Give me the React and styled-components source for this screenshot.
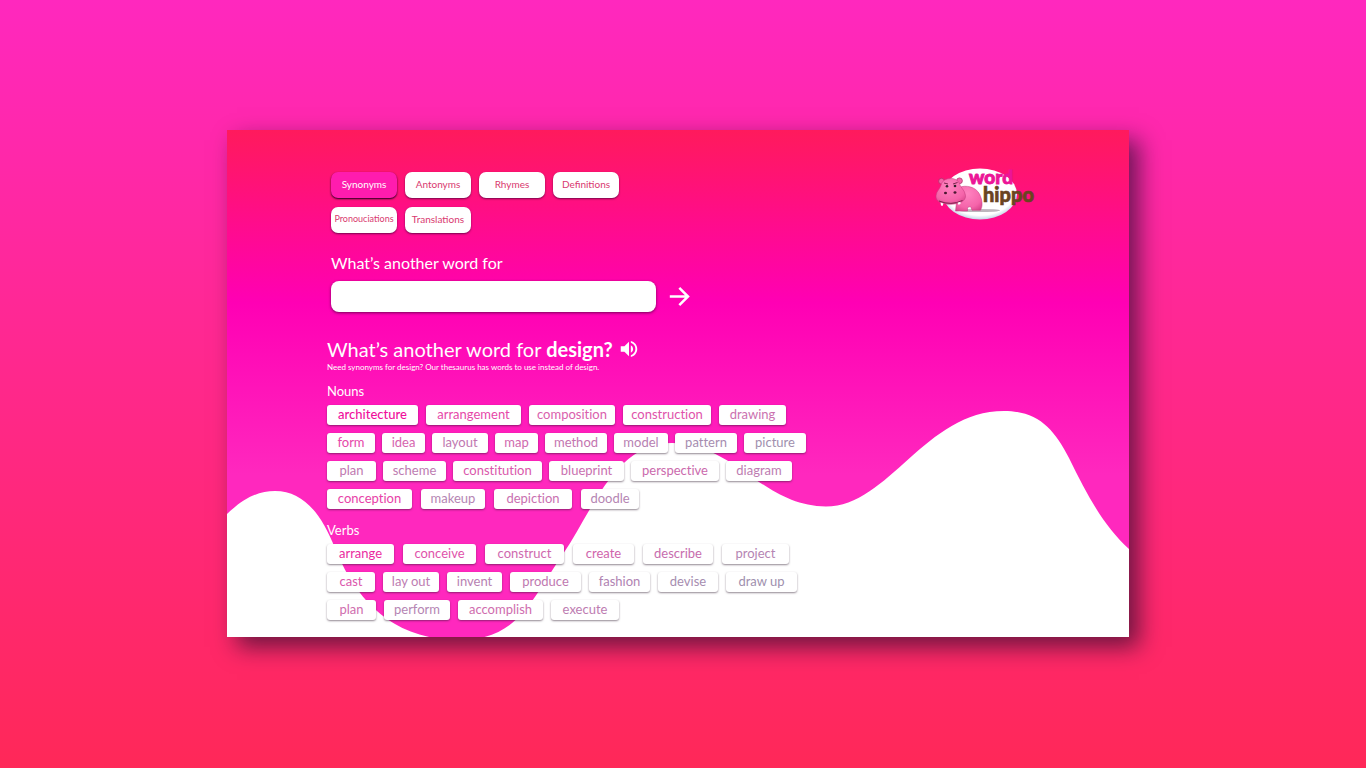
import React, { useState } from 'react';
import styled, { createGlobalStyle } from 'styled-components';

const GlobalStyle = createGlobalStyle`
  *, *::before, *::after { box-sizing: border-box; }
  body {
    margin: 0;
    font-family: Lato, "Open Sans", sans-serif;
    font-variant-ligatures: none;
  }
`;

const Page = styled.div`
  display: flex;
  min-height: 100vh;
  padding: 130px 237px 131px 227px;
  background: linear-gradient(180deg, #ff28be 0%, #ff2858 100%);
`;

const Panel = styled.main`
  position: relative;
  flex: 1;
  min-width: 0;
  padding: 38px 94px 17px 100px;
  background: linear-gradient(180deg, #ff1a5c 0%, #ff00b4 34%, #ff28be 68%, #ff28be 100%);
  box-shadow: 10px 10px 22px 0 rgba(30, 12, 42, 0.65);
`;

const Wave = styled.svg`
  position: absolute;
  inset: 0;
  width: 100%;
  height: 100%;
`;

const Content = styled.div`
  position: relative;
`;

const Header = styled.header`
  display: flex;
  justify-content: space-between;
  align-items: flex-start;
`;

const Tabs = styled.nav`
  display: grid;
  grid-template-columns: repeat(4, 66px);
  gap: 9px 8px;
  padding: 4px 0 0 4px;
`;

const Tab = styled.button`
  height: 26px;
  padding: 0 0 2px;
  border: 0;
  border-radius: 7px;
  font-family: inherit;
  font-size: ${(p) => (p.$small ? '9px' : '10px')};
  line-height: 12px;
  cursor: pointer;
  color: ${(p) => (p.$active ? '#fff' : '#d9396f')};
  background: ${(p) => (p.$active ? '#ff1cae' : '#fff')};
  box-shadow: 0 1px 2px ${(p) => (p.$active ? '#20001c' : 'rgba(60, 0, 50, 0.7)')};
`;

const Search = styled.form`
  padding: 20px 0 0 4px;
`;

const SearchLabel = styled.label`
  display: block;
  color: #fff;
  font-size: 16px;
  line-height: 20px;
`;

const SearchRow = styled.div`
  display: flex;
  align-items: center;
  gap: 13px;
  margin-top: 8px;
`;

const SearchInput = styled.input`
  width: 325px;
  height: 31px;
  padding: 0 12px;
  border: 0;
  border-radius: 8px;
  background: #fff;
  font: inherit;
  box-shadow: 0 1px 3px rgba(60, 0, 50, 0.7);
`;

const IconButton = styled.button`
  display: flex;
  padding: 0;
  border: 0;
  background: none;
  color: #fff;
  cursor: pointer;
`;

const TitleRow = styled.div`
  display: flex;
  align-items: center;
  gap: 5px;
  margin-top: 25px;
`;

const Title = styled.h1`
  margin: 0;
  color: #fff;
  font-size: 20px;
  font-weight: 400;
  line-height: 24px;
`;

const Subtitle = styled.p`
  margin: 1px 0 0;
  color: #fff;
  font-size: 8px;
  line-height: 10px;
`;

const Group = styled.section`
  margin-top: ${(p) => p.$top};
`;

const GroupTitle = styled.h2`
  margin: 0 0 6px;
  color: #fff;
  font-size: 13px;
  font-weight: 400;
  line-height: 16px;
`;

const Rows = styled.div`
  display: flex;
  flex-direction: column;
  gap: 8px;
`;

const Row = styled.div`
  display: flex;
  gap: ${(p) => p.$gap}px;
`;

const Chip = styled.a`
  flex: none;
  width: ${(p) => p.$width}px;
  height: 20px;
  border-radius: 3px;
  background: #fff;
  box-shadow: 0 1px 2px rgba(40, 20, 40, 0.5);
  color: ${(p) => p.$tone};
  font-size: 13px;
  font-weight: ${(p) => (p.$strong ? 500 : 400)};
  line-height: 19px;
  text-align: center;
  text-decoration: none;
  white-space: nowrap;
`;

const LogoLink = styled.a`
  display: block;
  flex: none;
  margin-left: 16px;
`;

const LogoDrawing = styled.svg`
  display: block;
  overflow: visible;
`;

const tabs = ['Synonyms', 'Antonyms', 'Rhymes', 'Definitions', 'Pronouciations', 'Translations'];

const nouns = [
  { gap: 8, words: [['architecture', 91, '#f00f9c'], ['arrangement', 95, '#e648a9'], ['composition', 86, '#da60ad'], ['construction', 88, '#df53ab'], ['drawing', 67, '#cb72b0']] },
  { gap: 7, words: [['form', 48, '#e648a9'], ['idea', 43, '#d565ae'], ['layout', 56, '#c078b0'], ['map', 43, '#cf69ae'], ['method', 62, '#c375b0'], ['model', 54, '#b781b2'], ['pattern', 62, '#a68db0'], ['picture', 62, '#a090ae']] },
  { gap: 7, words: [['plan', 49, '#c078b0'], ['scheme', 63, '#bd7cb1'], ['constitution', 89, '#da58ab'], ['blueprint', 75, '#c970af'], ['perspective', 88, '#cb6aad'], ['diagram', 66, '#bd7cb1']] },
  { gap: 9, words: [['conception', 85, '#e742a8'], ['makeup', 64, '#b585b3'], ['depiction', 78, '#c970b0'], ['doodle', 58, '#b585b3']] },
];

const verbs = [
  { gap: 9, words: [['arrange', 67, '#ea2ba0'], ['conceive', 73, '#df53ab'], ['construct', 79, '#cf69ae'], ['create', 61, '#d065ac'], ['describe', 70, '#c76dae'], ['project', 67, '#b585b3']] },
  { gap: 8, words: [['cast', 48, '#db56ac'], ['lay out', 56, '#bd7cb1'], ['invent', 55, '#b781b2'], ['produce', 71, '#c078b0'], ['fashion', 61, '#b083b2'], ['devise', 60, '#a68db0'], ['draw up', 71, '#a090ae']] },
  { gap: 8, words: [['plan', 49, '#cf6dae'], ['perform', 66, '#b585b3'], ['accomplish', 85, '#cf6dae'], ['execute', 68, '#bd7cb1']] },
];

function ArrowIcon() {
  return (
    <svg width="22" height="20" viewBox="0 0 22 20" fill="none" stroke="currentColor" strokeWidth="2.5" aria-hidden="true">
      <path d="M0.800 9.500H19.200M10.300 0.900L19 9.500L10.300 18.100" />
    </svg>
  );
}

function SpeakerIcon() {
  return (
    <svg width="22" height="22" viewBox="0 0 24 24" fill="currentColor" aria-hidden="true">
      <path d="M3 9v6h4l5 5V4L7 9H3zm13.500 3A4.500 4.500 0 0 0 14 7.970v8.050c1.480-.73 2.500-2.250 2.500-4.020zM14 3.230v2.060c2.890.86 5 3.540 5 6.710s-2.110 5.850-5 6.710v2.060c4.010-.91 7-4.490 7-8.770s-2.990-7.860-7-8.770z" />
    </svg>
  );
}

function HippoLogo() {
  return (
    <LogoDrawing width="98" height="54" viewBox="0 0 98 54" role="img" aria-label="Word Hippo">
      <defs>
        <radialGradient id="oval" cx="0.5" cy="0.45" r="0.55">
          <stop offset="0.85" stopColor="#fff" />
          <stop offset="1" stopColor="#c3d6e8" />
        </radialGradient>
        <radialGradient id="skin" cx="0.45" cy="0.3" r="0.8">
          <stop offset="0" stopColor="#ff83c0" />
          <stop offset="0.7" stopColor="#f564aa" />
          <stop offset="1" stopColor="#d8428a" />
        </radialGradient>
      </defs>
      <ellipse cx="43" cy="26" rx="37" ry="25.500" fill="url(#oval)" />
      <ellipse cx="42" cy="42.500" rx="21" ry="1.600" fill="#bdb6bd" />
      <path d="M22 19.500C29 16.500 39 19 42.500 26C46 33 45.500 39 43.500 42.200H35L33.500 38.500L30.500 39.500V43H18.500L19.500 34Z" fill="url(#skin)" stroke="#c23b7d" strokeWidth="0.500" />
      <circle cx="4.500" cy="13.200" r="2.900" fill="#f564aa" stroke="#a92a61" strokeWidth="0.700" />
      <circle cx="22.500" cy="12.800" r="2.900" fill="#f564aa" stroke="#a92a61" strokeWidth="0.700" />
      <path d="M4.500 15.500C7 9 20 8.500 22.500 15.500C23 19.500 28 22 28.500 27.500C29 33 23 35.800 14 36.300C5 36.500-1.500 33.500-1 28C-0.500 22.500 4 20 4.500 15.500Z" fill="url(#skin)" stroke="#c23b7d" strokeWidth="0.500" />
      <path d="M7 15L11 16M16 16L20.500 14.500M2 33Q14 38 25.500 32.500" fill="none" stroke="#6e1c43" strokeWidth="0.900" />
      <circle cx="10" cy="18.300" r="1.300" fill="#33202b" />
      <circle cx="18" cy="18" r="1.300" fill="#33202b" />
      <ellipse cx="8.500" cy="25" rx="1.500" ry="1.200" fill="#4a1730" />
      <ellipse cx="18" cy="24.500" rx="1.500" ry="1.200" fill="#4a1730" />
      <path d="M3.500 34.500L6.500 35.500L5.500 38L4 37.500ZM20.500 34.800L23.500 33.800L23.500 36L21.500 36.700Z" fill="#fff" />
      <text x="32" y="16" fontFamily="Lato, sans-serif" fontSize="19" fontWeight="900" fill="#ec1597" stroke="#ec1597" strokeWidth="0.900">word</text>
      <text x="46" y="34" fontFamily="Lato, sans-serif" fontSize="20" fontWeight="900" fill="#6a4420" stroke="#6a4420" strokeWidth="0.600">hippo</text>
    </LogoDrawing>
  );
}

function WordRows({ rows }) {
  return (
    <Rows>
      {rows.map((row) => (
        <Row key={row.words[0][0]} $gap={row.gap}>
          {row.words.map(([word, width, tone]) => (
            <Chip key={word} href={`#${word}`} $width={width} $tone={tone} $strong={word === 'architecture'}>
              {word}
            </Chip>
          ))}
        </Row>
      ))}
    </Rows>
  );
}

export default function App() {
  const [active, setActive] = useState('Synonyms');
  return (
    <Page>
      <GlobalStyle />
      <Panel>
        <Wave viewBox="0 0 902 507" preserveAspectRatio="none" aria-hidden="true">
          <path
            fill="#fff"
            d="M0 384C18 367 32 361 48 361C76 361 94 383 108 418C126 463 160 510 232 510C290 510 303 473 336 424C366 380 388 313 445 313C507 313 536 376.500 599 376.500C662 376.500 698 281 777 281C811 281 827 299 842 328C860 365 876 395 902 419V507H0Z"
          />
        </Wave>
        <Content>
          <Header>
            <Tabs aria-label="Word tools">
              {tabs.map((tab) => (
                <Tab
                  key={tab}
                  type="button"
                  $active={tab === active}
                  $small={tab.length > 12}
                  onClick={() => setActive(tab)}
                >
                  {tab}
                </Tab>
              ))}
            </Tabs>
            <LogoLink href="#home">
              <HippoLogo />
            </LogoLink>
          </Header>
          <Search onSubmit={(e) => e.preventDefault()}>
            <SearchLabel htmlFor="word">What’s another word for</SearchLabel>
            <SearchRow>
              <SearchInput id="word" type="text" />
              <IconButton type="submit" aria-label="Search">
                <ArrowIcon />
              </IconButton>
            </SearchRow>
          </Search>
          <TitleRow>
            <Title>
              What’s another word for <b>design?</b>
            </Title>
            <IconButton type="button" aria-label="Listen">
              <SpeakerIcon />
            </IconButton>
          </TitleRow>
          <Subtitle>Need synonyms for design? Our thesaurus has words to use instead of design.</Subtitle>
          <Group $top="11px">
            <GroupTitle>Nouns</GroupTitle>
            <WordRows rows={nouns} />
          </Group>
          <Group $top="13px">
            <GroupTitle>Verbs</GroupTitle>
            <WordRows rows={verbs} />
          </Group>
        </Content>
      </Panel>
    </Page>
  );
}
